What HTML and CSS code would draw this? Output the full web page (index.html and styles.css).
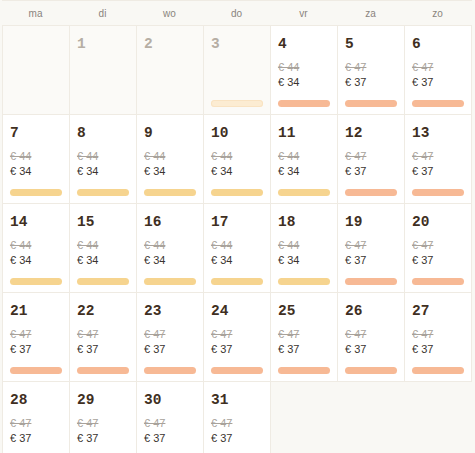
FILE: index.html
```html
<!DOCTYPE html>
<html>
<head>
<meta charset="utf-8">
<link rel="stylesheet" href="styles.css">
</head>
<body>
<div class="calendar">
  <div class="head">
    <div>ma</div><div>di</div><div>wo</div><div>do</div><div>vr</div><div>za</div><div>zo</div>
  </div>
  <div class="grid">
    <div class="cell empty"></div>
    <div class="cell off"><div class="num">1</div></div>
    <div class="cell off"><div class="num">2</div></div>
    <div class="cell off"><div class="num">3</div><div class="bar pale"></div></div>
    <div class="cell"><div class="num">4</div><div class="old">€ 44</div><div class="price">€ 34</div><div class="bar orange"></div></div>
    <div class="cell"><div class="num">5</div><div class="old">€ 47</div><div class="price">€ 37</div><div class="bar orange"></div></div>
    <div class="cell"><div class="num">6</div><div class="old">€ 47</div><div class="price">€ 37</div><div class="bar orange"></div></div>

    <div class="cell"><div class="num">7</div><div class="old">€ 44</div><div class="price">€ 34</div><div class="bar yellow"></div></div>
    <div class="cell"><div class="num">8</div><div class="old">€ 44</div><div class="price">€ 34</div><div class="bar yellow"></div></div>
    <div class="cell"><div class="num">9</div><div class="old">€ 44</div><div class="price">€ 34</div><div class="bar yellow"></div></div>
    <div class="cell"><div class="num">10</div><div class="old">€ 44</div><div class="price">€ 34</div><div class="bar yellow"></div></div>
    <div class="cell"><div class="num">11</div><div class="old">€ 44</div><div class="price">€ 34</div><div class="bar yellow"></div></div>
    <div class="cell"><div class="num">12</div><div class="old">€ 47</div><div class="price">€ 37</div><div class="bar orange"></div></div>
    <div class="cell"><div class="num">13</div><div class="old">€ 47</div><div class="price">€ 37</div><div class="bar orange"></div></div>

    <div class="cell"><div class="num">14</div><div class="old">€ 44</div><div class="price">€ 34</div><div class="bar yellow"></div></div>
    <div class="cell"><div class="num">15</div><div class="old">€ 44</div><div class="price">€ 34</div><div class="bar yellow"></div></div>
    <div class="cell"><div class="num">16</div><div class="old">€ 44</div><div class="price">€ 34</div><div class="bar yellow"></div></div>
    <div class="cell"><div class="num">17</div><div class="old">€ 44</div><div class="price">€ 34</div><div class="bar yellow"></div></div>
    <div class="cell"><div class="num">18</div><div class="old">€ 44</div><div class="price">€ 34</div><div class="bar yellow"></div></div>
    <div class="cell"><div class="num">19</div><div class="old">€ 47</div><div class="price">€ 37</div><div class="bar orange"></div></div>
    <div class="cell"><div class="num">20</div><div class="old">€ 47</div><div class="price">€ 37</div><div class="bar orange"></div></div>

    <div class="cell"><div class="num">21</div><div class="old">€ 47</div><div class="price">€ 37</div><div class="bar orange"></div></div>
    <div class="cell"><div class="num">22</div><div class="old">€ 47</div><div class="price">€ 37</div><div class="bar orange"></div></div>
    <div class="cell"><div class="num">23</div><div class="old">€ 47</div><div class="price">€ 37</div><div class="bar orange"></div></div>
    <div class="cell"><div class="num">24</div><div class="old">€ 47</div><div class="price">€ 37</div><div class="bar orange"></div></div>
    <div class="cell"><div class="num">25</div><div class="old">€ 47</div><div class="price">€ 37</div><div class="bar orange"></div></div>
    <div class="cell"><div class="num">26</div><div class="old">€ 47</div><div class="price">€ 37</div><div class="bar orange"></div></div>
    <div class="cell"><div class="num">27</div><div class="old">€ 47</div><div class="price">€ 37</div><div class="bar orange"></div></div>

    <div class="cell"><div class="num">28</div><div class="old">€ 47</div><div class="price">€ 37</div><div class="bar orange"></div></div>
    <div class="cell"><div class="num">29</div><div class="old">€ 47</div><div class="price">€ 37</div><div class="bar orange"></div></div>
    <div class="cell"><div class="num">30</div><div class="old">€ 47</div><div class="price">€ 37</div><div class="bar orange"></div></div>
    <div class="cell"><div class="num">31</div><div class="old">€ 47</div><div class="price">€ 37</div><div class="bar orange"></div></div>
  </div>
</div>
</body>
</html>
```

FILE: styles.css
```css
html, body {
  margin: 0;
  padding: 0;
  background: #f9f8f4;
  font-family: "Liberation Sans", Arial, sans-serif;
  overflow: hidden;
}
.calendar {
  margin-left: 2px;
  width: 470px;
}
.head {
  display: grid;
  grid-template-columns: repeat(7, 67px);
  height: 25px;
  border-top: 1px solid #efebe3;
  box-sizing: border-box;
}
.head div {
  text-align: center;
  font-size: 10px;
  color: #8a847d;
  line-height: 26px;
}
.grid {
  display: grid;
  grid-template-columns: repeat(7, 67px);
  grid-auto-rows: 89px;
  border-top: 1px solid #efebe3;
  border-left: 1px solid #efebe3;
}
.cell {
  box-sizing: border-box;
  background: #ffffff;
  border-right: 1px solid #efebe3;
  border-bottom: 1px solid #efebe3;
  padding: 10px 7px 7px 7px;
  display: flex;
  flex-direction: column;
}
.cell.off, .cell.empty {
  background: #fbfaf7;
}
.cell.empty {
  border-left: 0;
}
.num {
  font-family: "Liberation Mono", "Courier New", monospace;
  font-weight: bold;
  font-size: 14.5px;
  line-height: 16px;
  color: #3f2f22;
  margin-bottom: 8px;
}
.off .num {
  color: #b6aea4;
}
.old {
  font-size: 11px;
  line-height: 15px;
  color: #a8a29b;
  text-decoration: line-through;
}
.price {
  font-size: 11px;
  line-height: 15px;
  color: #3a3430;
}
.bar {
  margin-top: auto;
  height: 7px;
  border-radius: 4px;
}
.bar.orange { background: #f7b995; }
.bar.yellow { background: #f6d48f; }
.bar.pale { background: #fcecd2; box-shadow: inset 0 0 0 1px #f9e3c2; }
```
